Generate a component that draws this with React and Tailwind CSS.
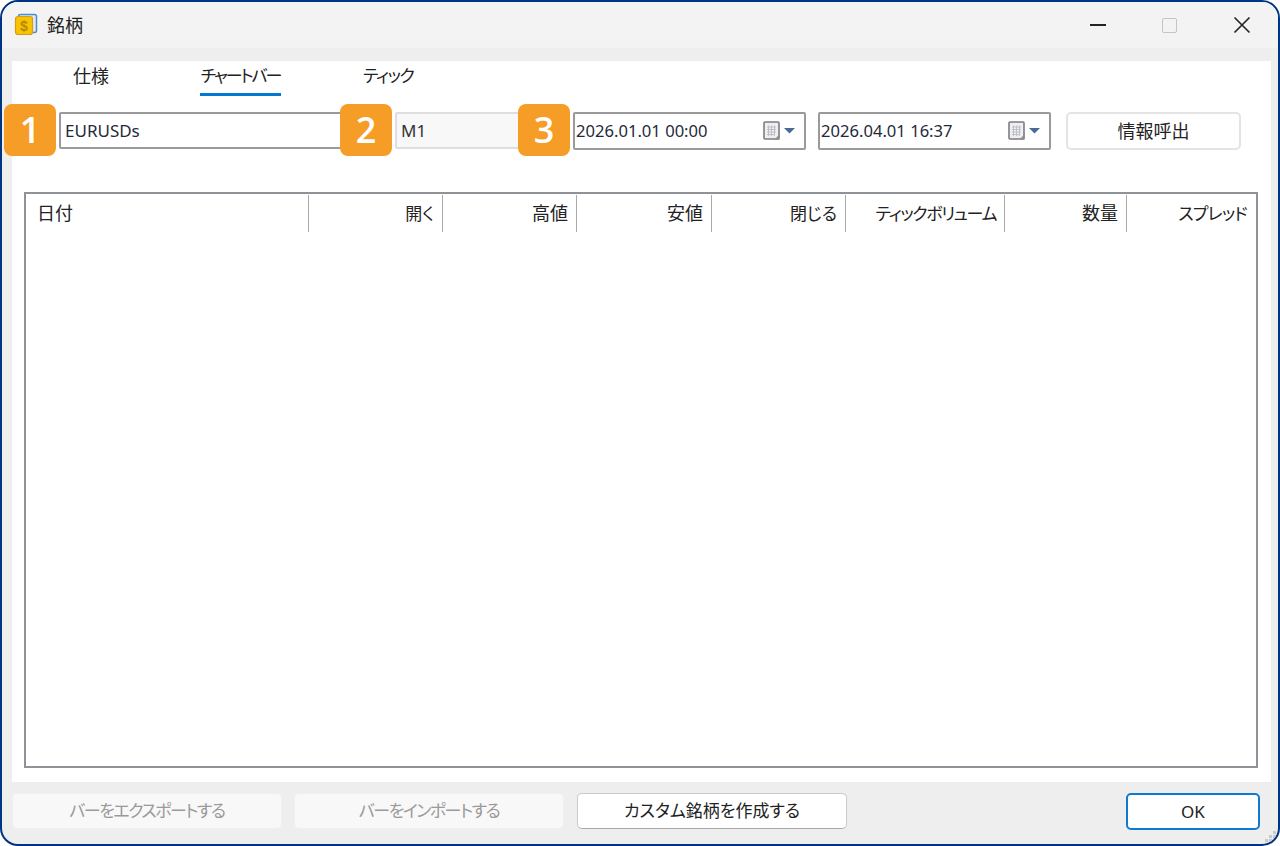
const font = "font-['Noto_Sans','Noto_Sans_CJK_JP',sans-serif] [font-feature-settings:'palt']"

const columns = [
  { label: "日付", width: "w-[283px]", text: "text-[18px]", left: true },
  { label: "開く", width: "w-[134px]", text: "text-[17px]" },
  { label: "高値", width: "w-[134px]", text: "text-[18px]" },
  { label: "安値", width: "w-[135px]", text: "text-[18px]" },
  { label: "閉じる", width: "w-[134px]", text: "text-[17px]" },
  { label: "ティックボリューム", width: "w-[159px]", text: "text-[17px] tracking-[-1.4px]" },
  { label: "数量", width: "w-[122px]", text: "text-[18px]" },
  { label: "スプレッド", width: "flex-1", text: "text-[17px] tracking-[-0.8px]", last: true },
]

function AppIcon() {
  return (
    <svg width="24" height="24" viewBox="0 0 24 24">
      <rect x="4.5" y="1.5" width="18" height="18" rx="2" fill="#dfe9f2" stroke="#4b8fc9" strokeWidth="1.5" />
      <rect x="1.5" y="3.5" width="17" height="18" rx="2.5" fill="#f8c400" stroke="#d99a1c" strokeWidth="1.2" />
      <text x="10" y="18" textAnchor="middle" fontSize="14" fontWeight="700" fill="#b8860b" fontFamily="Liberation Sans">$</text>
    </svg>
  )
}

function CalendarIcon() {
  return (
    <svg width="34" height="20" viewBox="0 0 34 20">
      <rect x="1" y="1" width="15" height="17" rx="1" fill="#efeff0" stroke="#7d7b80" strokeWidth="1.6" />
      <path d="M16.5 13 L11.5 18.8 L16.5 18.8 Z" fill="#8f8d90" />
      <path d="M4 6h9M4 8.5h9M4 11h9M4 13.5h7M5.5 4.5v10.5M8.5 4.5v10.5M11.5 4.5v10.5" stroke="#b7bcc6" strokeWidth="0.9" />
      <path d="M21 7h11l-5.5 5.5z" fill="#4a6a96" />
    </svg>
  )
}

function Badge({ n, className }) {
  return (
    <div className={`absolute top-0 z-10 flex h-[52px] w-[52px] items-center justify-center rounded-[8px] bg-[#f59d26] text-[36px] font-semibold leading-none text-white font-['Open_Sans',sans-serif] ${className}`}>
      {n}
    </div>
  )
}

function DateField({ value, className }) {
  return (
    <div className={`flex h-[38px] w-[233px] items-center justify-between rounded-[2px] border-2 border-[#9a9a9a] bg-white pl-[1px] pr-[7px] text-[16.6px] text-[#1f2a3a] ${className}`}>
      <span>{value}</span>
      <CalendarIcon />
    </div>
  )
}

function FooterButton({ children, disabled, className }) {
  return (
    <button className={`flex h-[36px] items-center justify-center whitespace-nowrap rounded-[5px] text-[17px] ${disabled ? "bg-[#f8f8f8] text-[#9a9a9a] border border-[#f0f0f0] tracking-[-1.5px]" : "bg-white text-[#222] border border-[#c9c9c9] border-b-[#a8a8a8]"} ${className}`}>
      {children}
    </button>
  )
}

export default function App() {
  return (
    <div className={`flex h-[846px] w-[1280px] flex-col overflow-hidden rounded-[18px] border-2 border-[#003380] bg-[#eeeeee] ${font}`}>
      {/* Title bar */}
      <div className="flex h-[46px] shrink-0 items-center bg-[#f3f3f3] pl-[12px]">
        <AppIcon />
        <span className="ml-[9px] text-[18px] text-[#222]">銘柄</span>
        <div className="ml-auto flex items-center">
          <div className="h-[2px] w-[16px] bg-[#222]" />
          <div className="ml-[56px] h-[15px] w-[15px] rounded-[2px] border border-[#c4c4c4]" />
          <svg className="ml-[56px] mr-[27px]" width="18" height="18" viewBox="0 0 18 18" fill="none" stroke="#222" strokeWidth="1.6">
            <path d="M1.5 1.5L16.5 16.5M16.5 1.5L1.5 16.5" />
          </svg>
        </div>
      </div>

      {/* Main panel */}
      <div className="ml-[10px] mr-[7px] mt-[13px] flex h-[721px] flex-col bg-white">
        {/* Tabs */}
        <div className="relative flex h-[34px] whitespace-nowrap text-[#222]">
          <span className="ml-[61px] mt-[2px] text-[18px]">仕様</span>
          <div className="ml-[91px] mt-[2px] h-[33px] w-[81px] border-b-[3px] border-[#0078d4] text-center text-[17px] tracking-[-2px]">チャートバー</div>
          <span className="ml-[82px] mt-[2px] text-[17px] tracking-[-1.5px]">ティック</span>
        </div>

        {/* Toolbar */}
        <div className="relative mt-[9px] flex h-[52px] items-start pt-[8px]">
          <Badge n="1" className="left-[-8px]" />
          <Badge n="2" className="left-[328px]" />
          <Badge n="3" className="left-[506px]" />
          <div className="ml-[47px] flex h-[37px] w-[290px] items-center rounded-[2px] border-2 border-[#9a9a9a] bg-white pl-[4px] text-[17px] text-[#1f2a3a]">EURUSDs</div>
          <div className="ml-[46px] flex h-[37px] w-[135px] items-center rounded-[2px] border-2 border-[#dedede] bg-[#f8f8f8] pl-[4px] text-[17px] text-[#333]">M1</div>
          <DateField value="2026.01.01 00:00" className="ml-[43px]" />
          <DateField value="2026.04.01 16:37" className="ml-[12px]" />
          <button className="ml-[15px] h-[38px] w-[175px] rounded-[5px] border-2 border-[#e4e4e4] bg-white text-[18px] text-[#222]">情報呼出</button>
        </div>

        {/* Table */}
        <div className="ml-[12px] mr-[13px] mt-[36px] flex h-[576px] flex-col border-2 border-[#8f9296] bg-white">
          <div className="flex h-[40px] whitespace-nowrap text-[#222]">
            {columns.map((col) => (
              <div key={col.label} className={`${col.width} ${col.text} mt-[1px] flex h-[37px] items-center ${col.left ? "justify-start pl-[11px]" : "justify-end pr-[8px]"} ${col.last ? "pr-[9px]" : "border-r border-[#aaaaaa]"}`}>
                {col.label}
              </div>
            ))}
          </div>
        </div>
      </div>

      {/* Footer */}
      <div className="relative flex flex-1 items-start pl-[10px] pt-[11px]">
        <FooterButton disabled className="w-[270px]">バーをエクスポートする</FooterButton>
        <FooterButton disabled className="ml-[12px] w-[270px]">バーをインポートする</FooterButton>
        <FooterButton className="ml-[13px] w-[270px]">カスタム銘柄を作成する</FooterButton>
        <button className="ml-[279px] h-[37px] w-[134px] rounded-[5px] border-2 border-[#0f7ad1] bg-white text-[17px] text-[#222]">OK</button>
        <svg className="absolute bottom-[1px] right-[1px]" width="14" height="14" viewBox="0 0 14 14" fill="#c9c9c9">
          <rect x="10" y="2" width="3" height="3" />
          <rect x="6" y="6" width="3" height="3" />
          <rect x="10" y="6" width="3" height="3" />
          <rect x="2" y="10" width="3" height="3" />
          <rect x="6" y="10" width="3" height="3" />
          <rect x="10" y="10" width="3" height="3" />
        </svg>
      </div>
    </div>
  )
}
